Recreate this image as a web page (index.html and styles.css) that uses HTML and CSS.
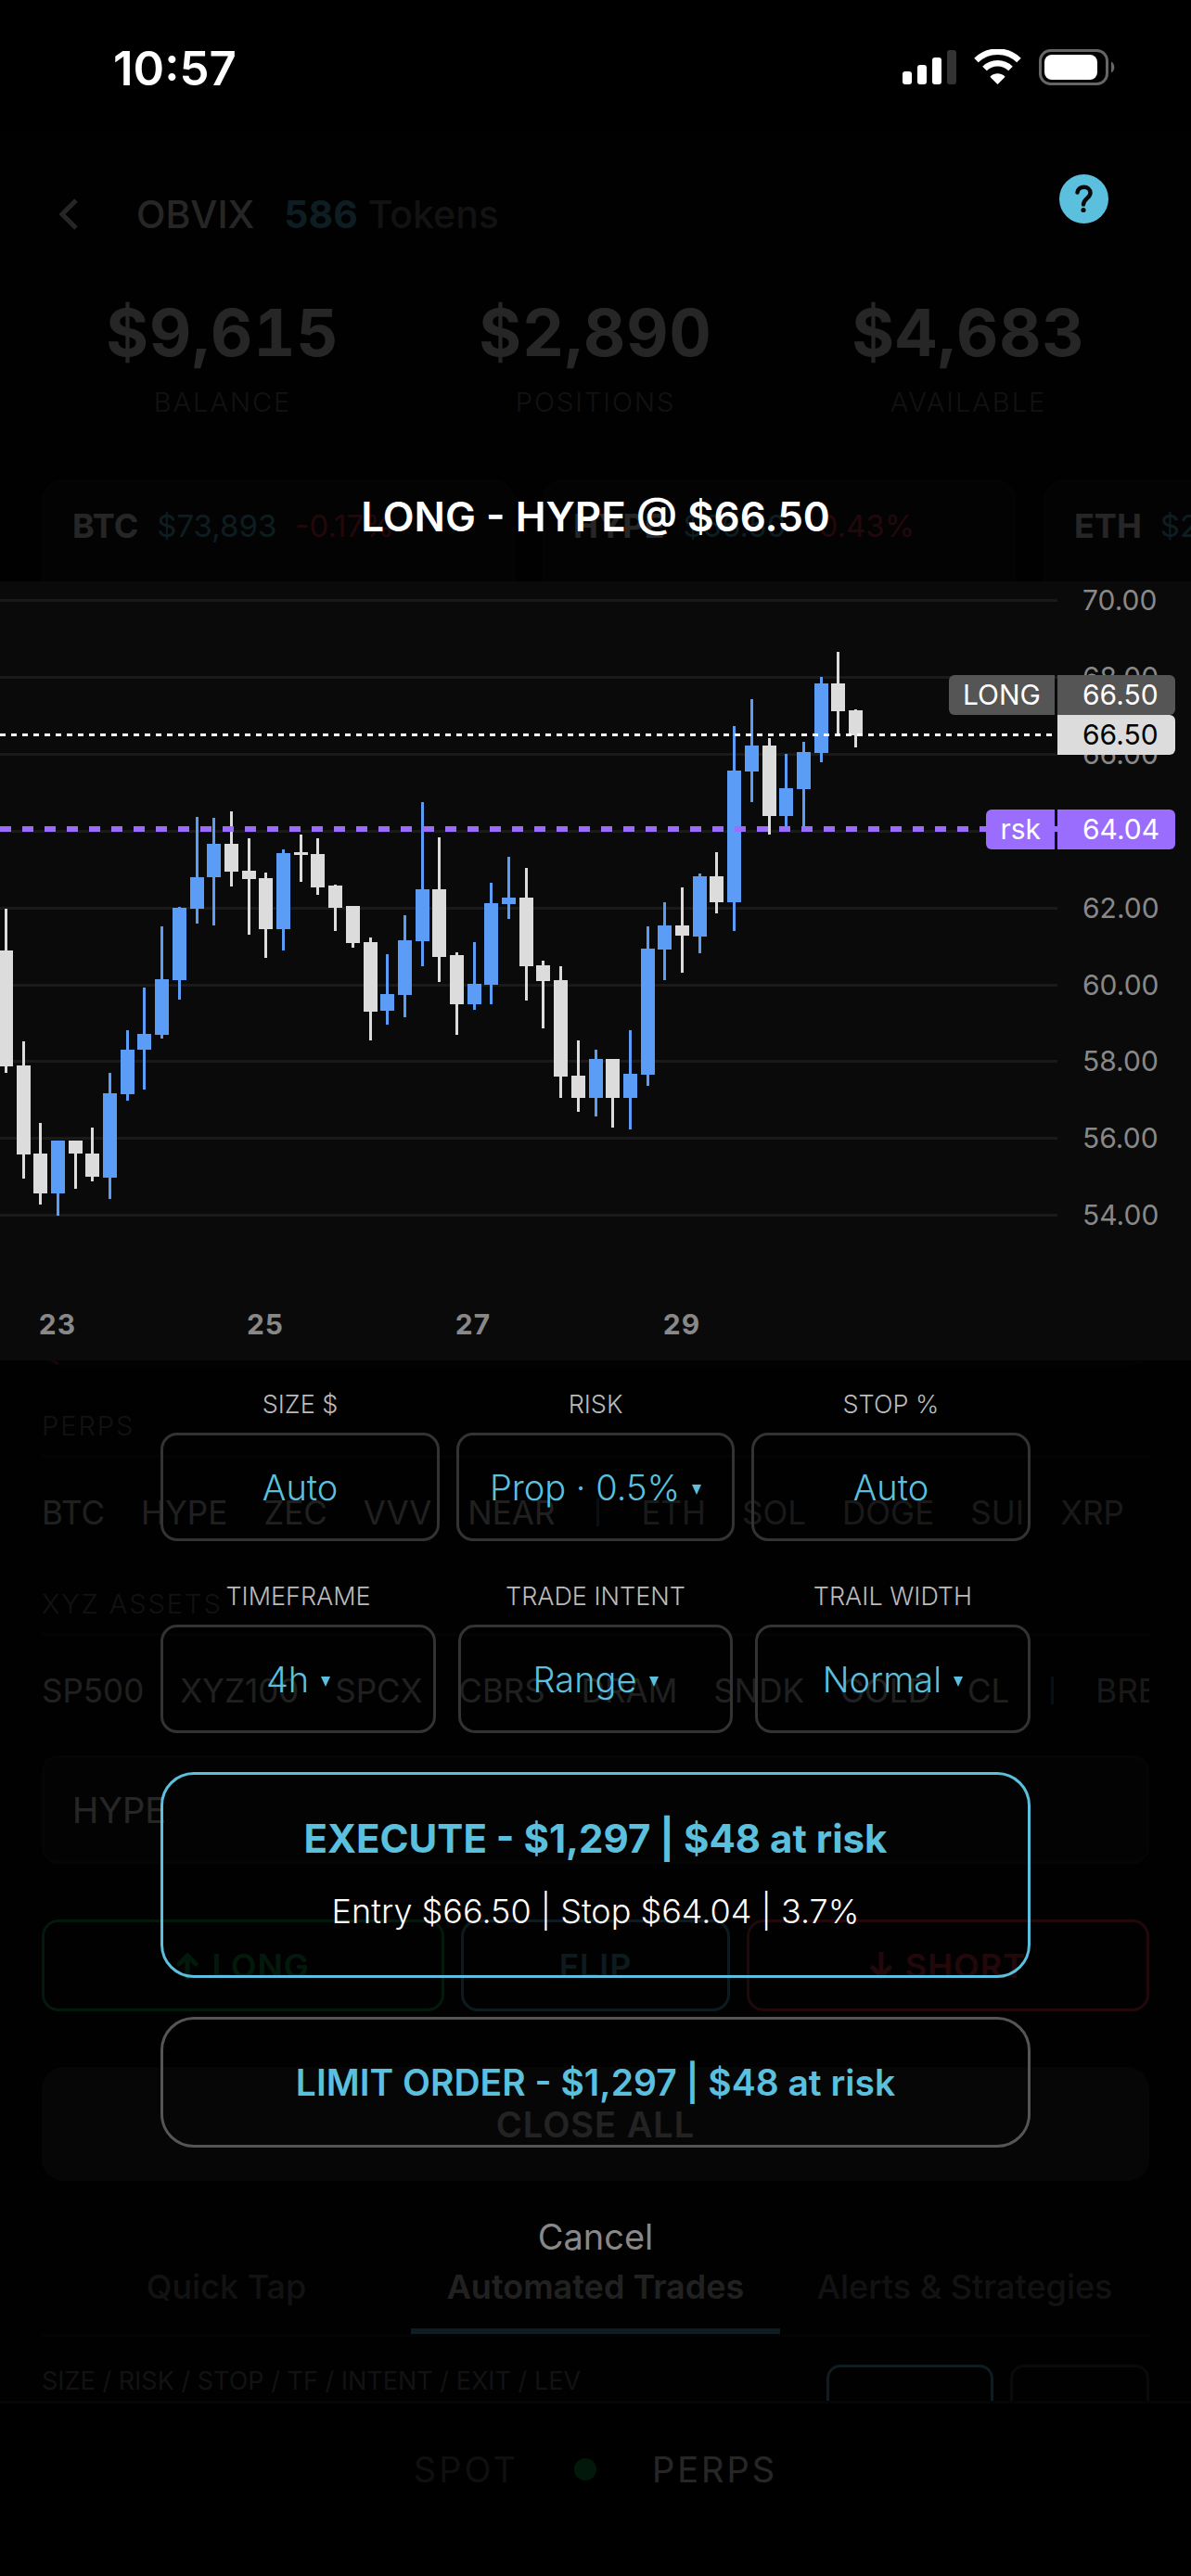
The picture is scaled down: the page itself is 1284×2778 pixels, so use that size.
FILE: index.html
```html
<!DOCTYPE html>
<html lang="en">
<head>
    <meta charset="UTF-8">
    <meta name="viewport" content="width=device-width, initial-scale=1.0">
    <title>OBVIX - Trade</title>
    <link rel="stylesheet" href="styles.css">
</head>
<body>

    <div class="app">

        <!-- Status bar -->
        <div class="status-bar">
            <span class="time">10:57</span>
            <svg class="status-icons" width="230" height="40" viewBox="0 0 230 40" aria-hidden="true">
                <g fill="#fff">
                    <rect x="0" y="24" width="10" height="14" rx="3"/>
                    <rect x="16" y="17" width="10" height="21" rx="3"/>
                    <rect x="32" y="9" width="10" height="29" rx="3"/>
                    <rect x="48" y="1" width="10" height="37" rx="3" fill="#333"/>
                    <path d="M102.500 38l-7.500-7.500a1 1 0 0 1 0-1.500c4.500-3.600 10.500-3.600 15 0a1 1 0 0 1 0 1.500z"/>
                </g>
                <g fill="none" stroke="#fff" stroke-width="6.500">
                    <path d="M79.500 12a33 33 0 0 1 46 0"/>
                    <path d="M88.500 21a20 20 0 0 1 28 0"/>
                </g>
                <rect x="148.500" y="1.500" width="72" height="36" rx="11" fill="none" stroke="#666" stroke-width="3"/>
                <rect x="153" y="6" width="57" height="27" rx="8" fill="#fff"/>
                <path d="M225 13.500a7 7 0 0 1 0 12z" fill="#666"/>
            </svg>
        </div>

        <div class="page">
            <header class="header">
                <button class="back-btn" aria-label="Back">
                    <svg width="22" height="34" viewBox="0 0 22 34"><path d="M19 2L4 17l15 15" fill="none" stroke="#fff" stroke-width="5"/></svg>
                </button>
                <span class="brand">OBVIX</span>
                <span class="tokens"><b>586</b> Tokens</span>
            </header>

            <section class="stats">
                <div><strong>$9,615</strong><span>BALANCE</span></div>
                <div><strong>$2,890</strong><span>POSITIONS</span></div>
                <div><strong>$4,683</strong><span>AVAILABLE</span></div>
            </section>

            <section class="tickers">
                <div class="ticker"><b>BTC</b><span class="price">$73,893</span><span class="change">-0.17%</span></div>
                <div class="ticker"><b>HYPE</b><span class="price">$66.50</span><span class="change">-0.43%</span></div>
                <div class="ticker"><b>ETH</b><span class="price">$2,014</span><span class="change">-0.21%</span></div>
            </section>

            <div class="main-chart">
                <svg width="20" height="8" viewBox="0 0 20 8"><path d="M1 0l10 6" fill="none" stroke="#a02838" stroke-width="3"/></svg>
            </div>

            <section class="assets">
                <h3>PERPS</h3>
                <div class="asset-row">
                    <a href="#">BTC</a><a href="#">HYPE</a><a href="#">ZEC</a><a href="#">VVV</a><a href="#">NEAR</a>
                    <i></i>
                    <a href="#" class="dim">ETH</a><a href="#" class="dim">SOL</a><a href="#" class="dim">DOGE</a><a href="#" class="dim">SUI</a><a href="#" class="dim">XRP</a>
                </div>
            </section>

            <section class="assets">
                <h3>XYZ ASSETS</h3>
                <div class="asset-row">
                    <a href="#">SP500</a><a href="#">XYZ100</a><a href="#">SPCX</a><a href="#">CBRS</a><a href="#">DRAM</a><a href="#">SNDK</a><a href="#">GOLD</a><a href="#">CL</a>
                    <i></i>
                    <a href="#" class="dim">BRENT</a>
                </div>
            </section>

            <input class="symbol-input" type="text" value="HYPE" aria-label="Symbol">

            <div class="side-buttons">
                <button class="btn-long">
                    <svg width="24" height="30" viewBox="0 0 24 30"><path d="M12 29V4M3 13l9-9 9 9"/></svg>LONG
                </button>
                <button class="btn-flip">FLIP</button>
                <button class="btn-short">
                    <svg width="24" height="30" viewBox="0 0 24 30"><path d="M12 1v25M3 17l9 9 9-9"/></svg>SHORT
                </button>
            </div>

            <button class="close-all">CLOSE ALL</button>

            <nav class="tabs">
                <button>Quick Tap</button>
                <button class="active">Automated Trades</button>
                <button>Alerts &amp; Strategies</button>
            </nav>

            <div class="summary">
                <span>SIZE / RISK / STOP / TF / INTENT / EXIT / LEV</span>
                <button class="summary-main" aria-label="Apply"></button>
                <button class="summary-alt" aria-label="Reset"></button>
            </div>
        </div>

        <footer class="bottom-nav">
            <a href="#" class="spot">SPOT</a>
            <span class="dot"></span>
            <a href="#">PERPS</a>
        </footer>

        <!-- Order dialog -->
        <div class="overlay">
            <button class="help-btn" aria-label="Help">
                <svg width="53" height="53" viewBox="0 0 53 53">
                    <circle cx="26.500" cy="26.500" r="26.500" fill="#5bc0de"/>
                    <path d="M19.500 19.500c.5-3.500 3.300-5.700 7-5.700 4.200 0 7 2.600 7 6.200 0 5.600-7.500 6.200-7.500 12.500" fill="none" stroke="#0a0a0a" stroke-width="4.500" stroke-linecap="round"/>
                    <circle cx="26" cy="38.500" r="2.600" fill="#0a0a0a"/>
                </svg>
            </button>

            <h2>LONG - HYPE @ $66.50</h2>

            <div class="chart">
                <div class="plot">
                    <svg id="candles" width="100%" height="840"></svg>
                </div>
                <div class="scale" id="scale"></div>
                <div class="tag tag-long"><span>LONG</span><b>66.50</b></div>
                <div class="tag tag-last"><b>66.50</b></div>
                <div class="tag tag-risk"><span>rsk</span><b>64.04</b></div>
            </div>

            <form class="order-form" onsubmit="return false">
                <div class="fields">
                    <div class="field">
                        <label for="size">SIZE $</label>
                        <div class="box"><input type="text" id="size" value="Auto"></div>
                    </div>
                    <div class="field">
                        <label for="risk">RISK</label>
                        <div class="box">
                            <select id="risk"><option>Prop · 0.5%</option></select>
                            <svg width="10" height="11" viewBox="0 0 10 11"><path d="M0 0h10L5 11z"/></svg>
                        </div>
                    </div>
                    <div class="field">
                        <label for="stop">STOP %</label>
                        <div class="box"><input type="text" id="stop" value="Auto"></div>
                    </div>
                </div>

                <div class="fields wide-gap">
                    <div class="field">
                        <label for="timeframe">TIMEFRAME</label>
                        <div class="box">
                            <select id="timeframe"><option>4h</option></select>
                            <svg width="10" height="11" viewBox="0 0 10 11"><path d="M0 0h10L5 11z"/></svg>
                        </div>
                    </div>
                    <div class="field">
                        <label for="intent">TRADE INTENT</label>
                        <div class="box">
                            <select id="intent"><option>Range</option></select>
                            <svg width="10" height="11" viewBox="0 0 10 11"><path d="M0 0h10L5 11z"/></svg>
                        </div>
                    </div>
                    <div class="field">
                        <label for="trail">TRAIL WIDTH</label>
                        <div class="box">
                            <select id="trail"><option>Normal</option></select>
                            <svg width="10" height="11" viewBox="0 0 10 11"><path d="M0 0h10L5 11z"/></svg>
                        </div>
                    </div>
                </div>

                <button class="execute">
                    EXECUTE - $1,297 | $48 at risk
                    <small>Entry $66.50 | Stop $64.04 | 3.7%</small>
                </button>
                <button class="limit">LIMIT ORDER - $1,297 | $48 at risk</button>
                <button class="cancel">Cancel</button>
            </form>
        </div>
    </div>

    <script>
        // [rising, high, body top, body bottom, low] in chart pixels, one per 4h
        const candles = [
            [0,353,398,523,530], [0,496,522,618,644], [0,584,617,660,672], [1,603,603,660,684], [0,603,603,617,655],
            [0,589,617,642,647], [1,530,552,643,666], [1,484,505,553,560], [1,438,488,505,548], [1,372,429,489,493],
            [1,351,352,430,451], [1,254,319,353,369], [1,255,283,319,371], [0,248,283,313,329], [0,277,312,321,381],
            [0,314,320,375,406], [1,289,293,375,398], [0,273,292,295,324], [0,277,294,330,338], [0,327,328,352,377],
            [0,350,350,390,395], [0,384,389,464,495], [1,402,445,463,478], [1,360,387,446,470], [1,238,332,388,415],
            [0,276,332,405,432], [0,400,403,456,489], [1,389,434,456,462], [1,325,347,435,456], [1,297,341,348,364],
            [0,309,341,415,452], [0,409,414,431,482], [0,415,430,534,557], [0,495,533,557,572], [1,505,515,557,577],
            [0,515,515,557,589], [1,484,531,557,591], [1,372,396,532,544], [1,346,371,397,430], [0,330,371,382,422],
            [1,315,318,383,401], [0,292,318,346,358], [1,156,204,346,377], [1,127,177,205,238], [0,169,177,253,273],
            [1,186,223,253,265], [1,173,184,224,265], [1,103,110,185,195], [0,76,110,140,165], [0,138,139,166,179]
        ];
        const days = [[62, 23], [286, 25], [510, 27], [735, 29]];

        let grid = '';
        let labels = '';
        for (let i = 0; i < 9; i++) {
            const y = 19 + Math.round(i * 82.9);
            grid += `<rect x="0" y="${y}" width="100%" height="3" fill="#1a1a1a"/>`;
            labels += `<span style="top:${y + 1}px">${70 - i * 2}.00</span>`;
        }

        let bars = '';
        candles.forEach(([up, high, top, bottom, low], i) => {
            const x = Math.round(-1.2 + i * 18.7);
            const color = up ? '#5b9cf6' : '#dcdcdc';
            bars += `<rect x="${x + 6}" y="${high}" width="3" height="${low - high}" fill="${color}"/>
                     <rect x="${x}" y="${top}" width="15" height="${bottom - top}" fill="${color}"/>`;
        });

        const lines = `
            <line x1="0" x2="100%" y1="165.5" y2="165.5" stroke="#fff" stroke-width="3" stroke-dasharray="6 6"/>
            <line x1="0" x2="100%" y1="267" y2="267" stroke="#9b6dff" stroke-width="6" stroke-dasharray="12 12"/>`;

        const dates = days.map(([x, d]) => `<text x="${x}" y="812" class="day">${d}</text>`).join('');

        document.getElementById('candles').innerHTML = grid + bars + lines + dates;
        document.getElementById('scale').innerHTML = labels;
    </script>

</body>
</html>
```

FILE: styles.css
```css
* {
    box-sizing: border-box;
}

body {
    margin: 0;
    background: #000;
    color: #fff;
    font-family: Inter, "Liberation Sans", sans-serif;
}

button, input, select {
    font-family: inherit;
    color: inherit;
    background: none;
    border: none;
    margin: 0;
    padding: 0;
}

a {
    color: inherit;
    text-decoration: none;
}

.app {
    position: relative;
    height: 100vh;
    overflow: hidden;
    display: flex;
    flex-direction: column;
    background: #080808;
}

/* Status bar */
.status-bar {
    position: relative;
    z-index: 3;
    flex: none;
    height: 141px;
    padding: 5px 81px 0 122px;
    display: flex;
    align-items: center;
    justify-content: space-between;
    background: #000;
}

.time {
    font-size: 51px;
    font-weight: 600;
}

/* Page under the dialog */
.page {
    flex: 1;
    min-height: 0;
    overflow: hidden;
    padding: 0 45px;
}

.header {
    height: 180px;
    display: flex;
    align-items: center;
    font-size: 41px;
    font-weight: 500;
}

.back-btn {
    width: 102px;
    padding-left: 18px;
    text-align: left;
    line-height: 0;
}

.tokens {
    margin-left: 32px;
    color: #777;
}

.tokens b {
    color: #5bc0de;
}

.stats {
    display: grid;
    grid-template-columns: repeat(3, 1fr);
    gap: 12px;
    text-align: center;
}

.stats strong {
    display: block;
    font-size: 70px;
    line-height: 76px;
    letter-spacing: 1px;
    font-variant-numeric: tabular-nums;
}

.stats span {
    display: block;
    margin-top: 19px;
    font-size: 29px;
    line-height: 36px;
    font-weight: 300;
    letter-spacing: 2px;
    color: #777;
}

.tickers {
    display: flex;
    gap: 30px;
    margin: 65px -45px 0 0;
    overflow: hidden;
}

.ticker {
    flex: 0 0 510px;
    height: 150px;
    padding: 24px 30px;
    border: 3px solid #1c1c1c;
    border-radius: 24px;
    background: #141414;
    display: flex;
    gap: 20px;
    font-size: 33px;
    line-height: 46px;
}

.ticker b {
    font-size: 36px;
}

.price {
    color: #5bc0de;
}

.change {
    color: #e0384a;
}

.main-chart {
    margin-top: 30px;
    height: 776px;
    padding-left: 7px;
    border-radius: 18px;
    background: #141414;
    display: flex;
    align-items: flex-end;
}

.assets {
    margin-top: 47px;
}

.assets + .assets {
    margin-top: 59px;
}

.assets h3 {
    margin: 0;
    padding-bottom: 13px;
    border-bottom: 3px solid #1c1c1c;
    font-size: 29px;
    line-height: 36px;
    font-weight: 300;
    letter-spacing: 2px;
    color: #777;
}

.asset-row {
    margin-top: 37px;
    display: flex;
    align-items: center;
    gap: 39px;
    overflow: hidden;
    font-size: 35px;
    line-height: 44px;
    white-space: nowrap;
}

.asset-row a {
    color: #d8d8d8;
}

.asset-row a.dim {
    color: #aaa;
}

.asset-row i {
    flex: none;
    width: 3px;
    height: 30px;
    margin: 0 6px;
    background: #2f6f85;
}

.symbol-input {
    display: block;
    width: 100%;
    height: 117px;
    margin-top: 48px;
    padding: 0 30px;
    border: 3px solid #222;
    border-radius: 18px;
    background: #141414;
    font-size: 38px;
}

.side-buttons {
    display: grid;
    grid-template-columns: 3fr 2fr 3fr;
    gap: 18px;
    margin-top: 60px;
}

.side-buttons button {
    height: 99px;
    border: 3px solid currentColor;
    border-radius: 18px;
    display: flex;
    align-items: center;
    justify-content: center;
    gap: 14px;
    font-size: 36px;
    font-weight: 600;
    letter-spacing: 1px;
}

.side-buttons svg {
    fill: none;
    stroke: currentColor;
    stroke-width: 5;
    stroke-linecap: round;
}

.side-buttons .btn-long {
    color: #17a54a;
}

.side-buttons .btn-flip {
    color: #5bb0cc;
}

.side-buttons .btn-short {
    color: #e8384a;
}

.close-all {
    display: block;
    width: 100%;
    height: 123px;
    margin-top: 60px;
    border-radius: 24px;
    background: #2a2a2a;
    color: #e6e6e6;
    font-size: 38px;
    font-weight: 600;
    letter-spacing: 1px;
}

.tabs {
    display: grid;
    grid-template-columns: repeat(3, 1fr);
    margin-top: 62px;
    border-bottom: 3px solid #1c1c1c;
}

.tabs button {
    padding: 30px 0 23px;
    border-bottom: 6px solid transparent;
    font-size: 36px;
    line-height: 44px;
    font-weight: 500;
    color: #777;
    white-space: nowrap;
}

.tabs .active {
    color: #ddd;
    font-weight: 600;
    border-color: #5bc0de;
}

.summary {
    display: flex;
    gap: 18px;
    margin-top: 30px;
    font-size: 27px;
    line-height: 36px;
    color: #777;
}

.summary span {
    flex: 1;
}

.summary button {
    height: 81px;
    border: 3px solid #444;
    border-radius: 15px;
}

.summary .summary-main {
    width: 180px;
    border-color: #5bc0de;
}

.summary .summary-alt {
    width: 150px;
}

.bottom-nav {
    flex: none;
    height: 189px;
    padding-top: 47px;
    border-top: 3px solid #222;
    background: #000;
    display: flex;
    justify-content: center;
    gap: 60px;
    font-size: 38px;
    line-height: 48px;
    letter-spacing: 3px;
}

.spot {
    color: #666;
}

.dot {
    width: 24px;
    height: 24px;
    margin-top: 12px;
    border-radius: 50%;
    background: #12a04a;
}

/* Dialog */
.overlay {
    position: absolute;
    inset: 0;
    z-index: 2;
    padding-top: 530px;
    background: rgba(0, 0, 0, 0.85);
}

.help-btn {
    position: absolute;
    top: 188px;
    right: 89px;
    line-height: 0;
}

.overlay h2 {
    margin: 0 0 43px;
    font-size: 44px;
    line-height: 54px;
    font-weight: 600;
    text-align: center;
}

.chart {
    position: relative;
    display: flex;
    background: #0a0a0a;
}

.plot {
    flex: 1;
    overflow: hidden;
    line-height: 0;
}

.day {
    font-size: 30px;
    font-weight: 700;
    letter-spacing: 1px;
    text-anchor: middle;
    fill: #888;
}

.scale {
    position: relative;
    width: 144px;
    font-size: 30px;
    line-height: 44px;
    color: #888;
}

.scale span {
    position: absolute;
    left: 27px;
    transform: translateY(-50%);
}

/* Price tags pinned over the chart's right edge */
.tag {
    position: absolute;
    right: 17px;
    display: flex;
    gap: 3px;
    font-size: 30px;
    line-height: 43px;
}

.tag span {
    padding: 0 15px;
    border-radius: 6px 0 0 6px;
}

.tag b {
    width: 127px;
    padding-left: 27px;
    border-radius: 0 6px 6px 0;
    font-weight: 400;
}

.tag-long {
    top: 101px;
}

.tag-long span, .tag-long b {
    background: #555;
}

.tag-last {
    top: 144px;
}

.tag-last b {
    background: #dcdcdc;
    color: #000;
}

.tag-risk {
    top: 246px;
}

.tag-risk span, .tag-risk b {
    background: #9b6dff;
}

/* Order form */
.order-form {
    width: 73%;
    margin: 30px auto 0;
    display: flex;
    flex-direction: column;
    gap: 42px;
}

.fields {
    display: grid;
    grid-template-columns: repeat(3, 1fr);
    gap: 18px;
}

.fields.wide-gap {
    gap: 24px;
}

.field {
    min-width: 0;
    text-align: center;
}

.field label {
    display: block;
    margin-bottom: 12px;
    font-size: 27px;
    line-height: 36px;
    font-weight: 300;
    color: #bbb;
}

.box {
    height: 117px;
    border: 3px solid #333;
    border-radius: 18px;
    display: flex;
    align-items: center;
    justify-content: center;
    gap: 13px;
    color: #5bc0de;
}

.box input {
    width: 100%;
    font-size: 38px;
    font-weight: 300;
    text-align: center;
}

.box select {
    appearance: none;
    field-sizing: content;
    font-size: 38px;
    font-weight: 300;
}

.box svg {
    fill: currentColor;
    margin-top: 6px;
}

.execute, .limit {
    border: 3px solid #5bc0de;
    border-radius: 36px;
    color: #5bc0de;
}

.execute {
    height: 222px;
    font-size: 42px;
    line-height: 48px;
    font-weight: 700;
}

.execute small {
    display: block;
    margin-top: 30px;
    font-size: 36px;
    font-weight: 300;
    color: #fff;
}

.limit {
    height: 141px;
    border-color: #555;
    font-size: 39px;
    font-weight: 600;
}

.cancel {
    margin-top: 30px;
    font-size: 38px;
    line-height: 48px;
    color: #888;
}
```
